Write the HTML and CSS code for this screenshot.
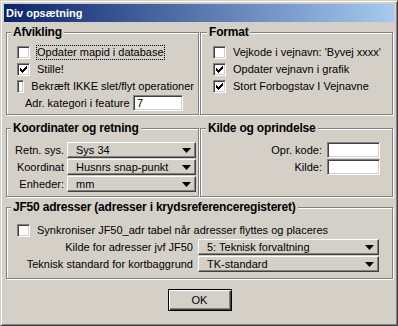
FILE: index.html
```html
<!DOCTYPE html>
<html lang="da">
<head>
  <meta charset="UTF-8" />
  <title>Div opsætning</title>
  <link rel="stylesheet" href="styles.css">
</head>
<body>

<div class="window">
  <div class="titlebar">Div opsætning</div>

  <div class="content">
    <div class="grid">

      <fieldset class="group afvikling">
        <legend>Afvikling</legend>
        <div class="check"><span class="box"></span><span class="lbl focus">Opdater mapid i database</span></div>
        <div class="check"><span class="box checked"><svg width="7" height="7" viewBox="0 0 7 7"><path d="M0 2h1v3h-1z M1 3h1v3h-1z M2 4h1v3h-1z M3 3h1v3h-1z M4 2h1v3h-1z M5 1h1v3h-1z M6 0h1v3h-1z"/></svg></span><span class="lbl">Stille!</span></div>
        <div class="check"><span class="box"></span><span class="lbl">Bekræft IKKE slet/flyt operationer</span></div>
        <div class="adr">
          <span>Adr. kategori i feature</span>
          <span class="field">7</span>
        </div>
      </fieldset>

      <fieldset class="group format">
        <legend>Format</legend>
        <div class="check"><span class="box"></span><span class="lbl">Vejkode i vejnavn: 'Byvej xxxx'</span></div>
        <div class="check"><span class="box checked"><svg width="7" height="7" viewBox="0 0 7 7"><path d="M0 2h1v3h-1z M1 3h1v3h-1z M2 4h1v3h-1z M3 3h1v3h-1z M4 2h1v3h-1z M5 1h1v3h-1z M6 0h1v3h-1z"/></svg></span><span class="lbl">Opdater vejnavn i grafik</span></div>
        <div class="check"><span class="box checked"><svg width="7" height="7" viewBox="0 0 7 7"><path d="M0 2h1v3h-1z M1 3h1v3h-1z M2 4h1v3h-1z M3 3h1v3h-1z M4 2h1v3h-1z M5 1h1v3h-1z M6 0h1v3h-1z"/></svg></span><span class="lbl">Stort Forbogstav I Vejnavne</span></div>
      </fieldset>

      <fieldset class="group koord">
        <legend>Koordinater og retning</legend>
        <div class="form koord-form">
          <span class="label">Retn. sys.</span>
          <span class="combo">Sys 34<svg class="arrow" width="9" height="5" viewBox="0 0 9 5"><path d="M0 0h9l-4.5 5z"/></svg></span>
          <span class="label">Koordinat</span>
          <span class="combo">Husnrs snap-punkt<svg class="arrow" width="9" height="5" viewBox="0 0 9 5"><path d="M0 0h9l-4.5 5z"/></svg></span>
          <span class="label">Enheder:</span>
          <span class="combo">mm<svg class="arrow" width="9" height="5" viewBox="0 0 9 5"><path d="M0 0h9l-4.5 5z"/></svg></span>
        </div>
      </fieldset>

      <fieldset class="group kilde">
        <legend>Kilde og oprindelse</legend>
        <div class="form kilde-form">
          <span class="label">Opr. kode:</span>
          <span class="field"></span>
          <span class="label">Kilde:</span>
          <span class="field"></span>
        </div>
      </fieldset>

    </div>

    <fieldset class="group jf50">
      <legend>JF50 adresser (adresser i krydsreferenceregisteret)</legend>
      <div class="check"><span class="box"></span><span class="lbl">Synkroniser JF50_adr tabel når adresser flyttes og placeres</span></div>
      <div class="form jf50-form">
        <span class="label">Kilde for adresser jvf JF50</span>
        <span class="combo">5: Teknisk forvaltning<svg class="arrow" width="9" height="5" viewBox="0 0 9 5"><path d="M0 0h9l-4.5 5z"/></svg></span>
        <span class="label">Teknisk standard for kortbaggrund</span>
        <span class="combo">TK-standard<svg class="arrow" width="9" height="5" viewBox="0 0 9 5"><path d="M0 0h9l-4.5 5z"/></svg></span>
      </div>
    </fieldset>

    <div class="buttons">
      <button class="btn">OK</button>
    </div>
  </div>
</div>

</body>
</html>
```

FILE: styles.css
```css
body {
  margin: 0;
  background: #d4d0c8;
  font-family: "Liberation Sans", Arial, sans-serif;
  font-size: 11px;
  color: #000;
}
.window {
  width: 398px;
  height: 326px;
  box-sizing: border-box;
  border: 1px solid;
  border-color: #d4d0c8 #404040 #404040 #d4d0c8;
  box-shadow: inset 1px 1px #fff, inset -1px -1px #808080;
  padding: 3px;
}
.titlebar {
  height: 18px;
  line-height: 18px;
  padding-left: 2px;
  color: #fff;
  font-weight: bold;
  background: linear-gradient(to right, #0a246a, #a6caf0);
}
.content {
  padding: 3px 1px 0 2px;
}
.grid {
  display: grid;
  grid-template-columns: 193px 193px;
  grid-template-rows: 90px 76px;
  column-gap: 1px;
  row-gap: 6px;
}

/* etched group box */
.group {
  margin: 0;
  min-width: 0;
  box-sizing: border-box;
  border: 1px solid #808080;
  box-shadow: inset 1px 1px #fff, 1px 1px #fff;
  padding: 5px 4px 0 4px;
}
.group legend {
  padding: 0 2px;
  font-size: 12px;
  line-height: 14px;
  font-weight: bold;
  letter-spacing: -0.2px;
  background: #d4d0c8;
}
.format { padding-left: 6px; }
.koord, .kilde { padding-top: 7px; }
.kilde { padding-left: 5px; }

/* checkboxes */
.check {
  display: flex;
  align-items: center;
  height: 17px;
}
.box {
  width: 13px;
  height: 13px;
  box-sizing: border-box;
  margin-left: 6px;
  background: #fff;
  border: 1px solid;
  border-color: #808080 #fff #fff #808080;
  box-shadow: inset 1px 1px #404040, inset -1px -1px #d4d0c8;
  display: flex;
  align-items: center;
  justify-content: center;
}
.box svg { display: block; }
.lbl {
  margin-left: 7px;
  line-height: 13px;
  white-space: nowrap;
}
.focus {
  outline: 1px dotted #000;
}

.adr {
  display: grid;
  grid-template-columns: 108px 50px;
  align-items: center;
  height: 16px;
  padding-left: 14px;
}

/* sunken edit field */
.field {
  height: 16px;
  box-sizing: border-box;
  background: #fff;
  border: 1px solid;
  border-color: #808080 #fff #fff #808080;
  box-shadow: inset 1px 1px #404040, inset -1px -1px #d4d0c8;
  padding: 0 3px;
  line-height: 14px;
}

/* label + control grids */
.form {
  display: grid;
  align-items: center;
  row-gap: 1px;
}
.form .label {
  text-align: right;
  white-space: nowrap;
}
.koord-form { grid-template-columns: 53px 129px; column-gap: 3px; }
.kilde-form { grid-template-columns: 116px 53px; column-gap: 5px; }
.jf50-form { grid-template-columns: 182px 181px; column-gap: 5px; }

/* popup menu button */
.combo {
  position: relative;
  height: 16px;
  box-sizing: border-box;
  border: 1px solid;
  border-color: #fff #404040 #404040 #fff;
  box-shadow: inset -1px -1px #808080;
  padding-left: 8px;
  line-height: 14px;
  white-space: nowrap;
}
.combo .arrow {
  position: absolute;
  right: 4px;
  top: 5px;
}

.jf50 {
  height: 79px;
  margin-top: 3px;
  padding-top: 8px;
}

.buttons {
  display: flex;
  justify-content: center;
  margin-top: 10px;
}
.btn {
  width: 64px;
  height: 22px;
  padding: 0;
  font-family: inherit;
  font-size: 11px;
  color: #000;
  background: #d4d0c8;
  border: 1px solid #000;
  box-shadow: inset 1px 1px #fff, inset -1px -1px #404040, inset -2px -2px #808080;
}
```
